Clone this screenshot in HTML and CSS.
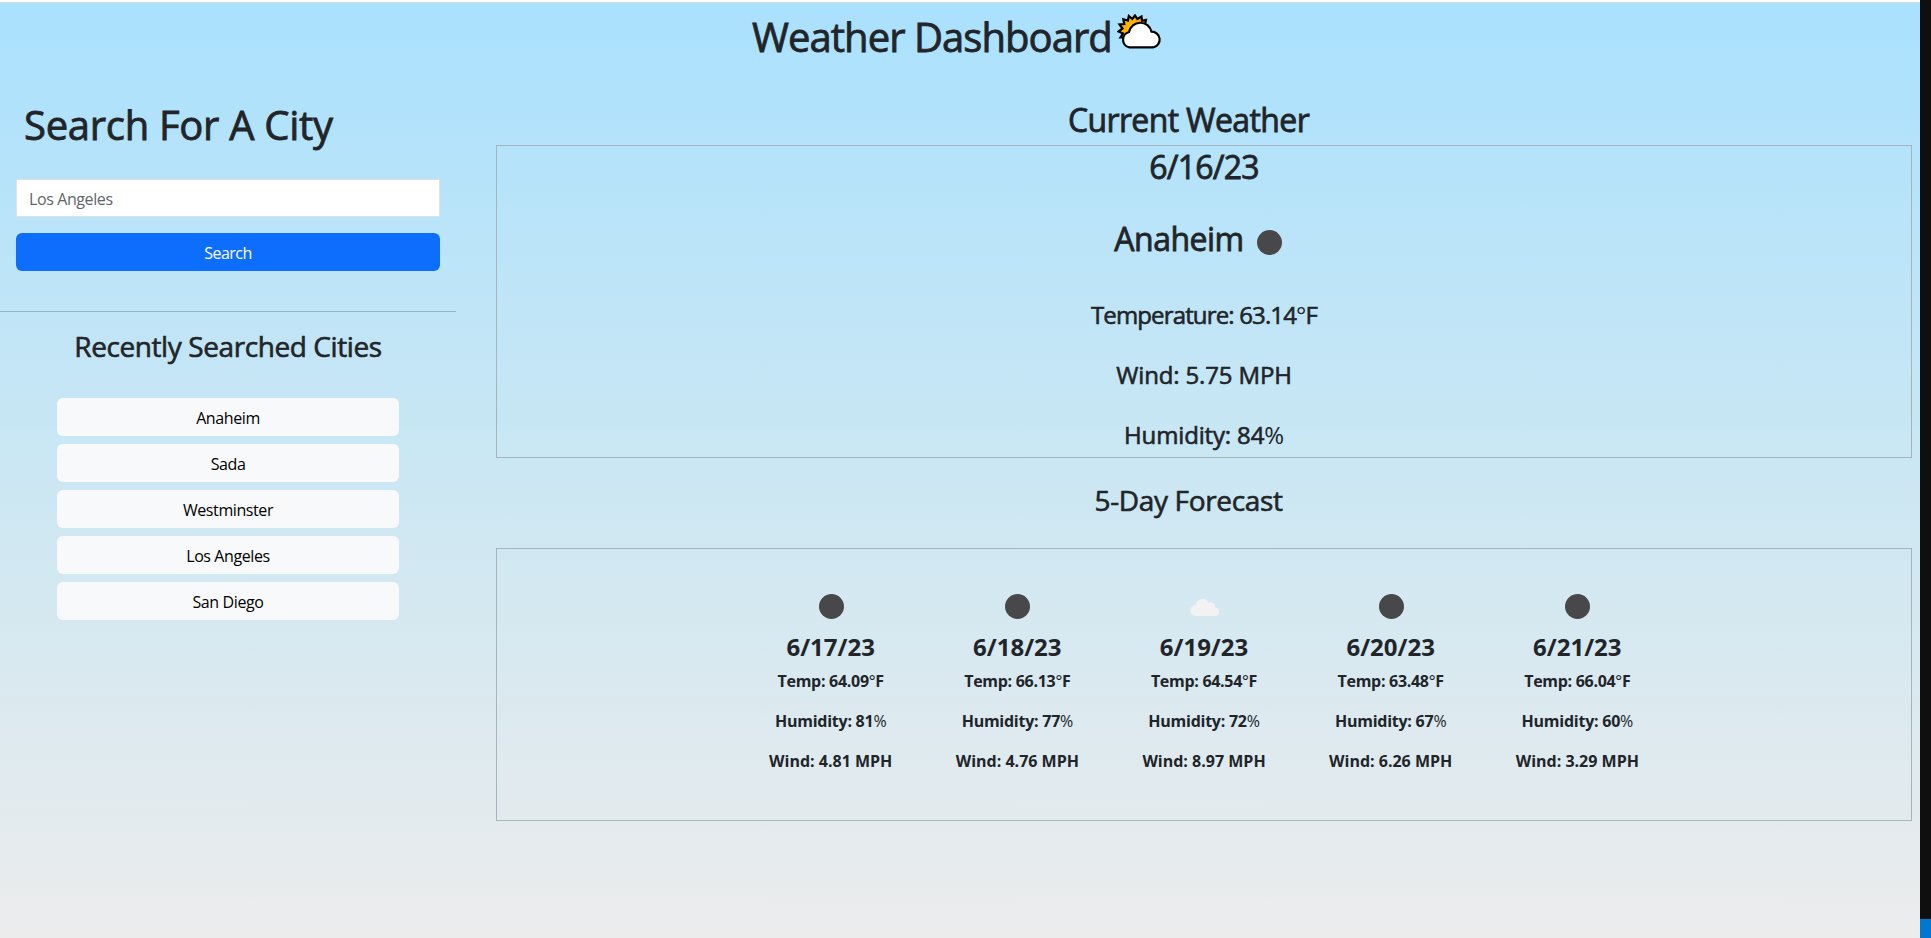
FILE: index.html
```html
<!DOCTYPE html>
<html lang="en">
<head>
<meta charset="utf-8">
<title>Weather Dashboard</title>
<link rel="stylesheet" href="styles.css">
</head>
<body>
<div class="page">
<header class="header">
<h1 class="title">Weather Dashboard</h1>
<svg class="logo" viewBox="0 0 46 36"><path d="M8.500 23.500 3.500 23.500 6 19.500 1.500 17.500 5.500 14.500 2.500 10.500 7.300 10 6.300 5.200 10.900 6.500 11.800 2 15.300 5 18 1.500 20.300 5 24.500 2.500 25 6.800 29 6 28 10.600 24 18 12 24Z" fill="#ffb000" stroke="#000" stroke-width="2.200"/><circle cx="18" cy="17" r="7.500" fill="#ffd400"/><path d="M12 33.300A7.900 7.900 0 0 1 12 18 11.500 11.500 0 0 1 34.500 17.700 7.900 7.900 0 0 1 36.500 33.300Z" fill="#fff" stroke="#000" stroke-width="2.200"/></svg>
</header>
<main class="main">
<aside class="sidebar">
<h1 class="search-title">Search For A City</h1>
<form class="form"><input class="field" type="text" placeholder="Los Angeles"><button class="submit" type="button">Search</button></form>
<h3 class="recent-title">Recently Searched Cities</h3>
<div class="cities">
<button class="city">Anaheim</button>
<button class="city">Sada</button>
<button class="city">Westminster</button>
<button class="city">Los Angeles</button>
<button class="city">San Diego</button>
</div>
</aside>
<section class="content">
<h2 class="section-title">Current Weather</h2>
<div class="current">
<h2 class="date">6/16/23</h2>
<h2 class="place"><span>Anaheim</span><i class="moon"></i></h2>
<h4 class="stat temp">Temperature: 63.14<span class="light">°</span>F</h4>
<h4 class="stat">Wind: 5.75 MPH</h4>
<h4 class="stat">Humidity: 84<span class="light">%</span></h4>
</div>
<h3 class="forecast-title">5-Day Forecast</h3>
<div class="forecast">
<article class="day"><div class="icon"><i class="moon"></i></div><h4 class="day-date">6/17/23</h4><p class="line tl">Temp: 64.09<span class="light">°</span>F</p><p class="line hl">Humidity: 81<span class="light">%</span></p><p class="line">Wind: 4.81 MPH</p></article>
<article class="day"><div class="icon"><i class="moon"></i></div><h4 class="day-date">6/18/23</h4><p class="line tl">Temp: 66.13<span class="light">°</span>F</p><p class="line hl">Humidity: 77<span class="light">%</span></p><p class="line">Wind: 4.76 MPH</p></article>
<article class="day"><div class="icon"><svg class="cloud" viewBox="0 0 30 19"><path d="M5.500 19a5.500 5.500 0 0 1 .5-11A6.500 6.500 0 0 1 18.500 5.800 4.500 4.500 0 0 1 25 10.500 4.300 4.300 0 0 1 26 19Z" fill="#f2f2f2"/></svg></div><h4 class="day-date">6/19/23</h4><p class="line tl">Temp: 64.54<span class="light">°</span>F</p><p class="line hl">Humidity: 72<span class="light">%</span></p><p class="line">Wind: 8.97 MPH</p></article>
<article class="day"><div class="icon"><i class="moon"></i></div><h4 class="day-date">6/20/23</h4><p class="line tl">Temp: 63.48<span class="light">°</span>F</p><p class="line hl">Humidity: 67<span class="light">%</span></p><p class="line">Wind: 6.26 MPH</p></article>
<article class="day"><div class="icon"><i class="moon"></i></div><h4 class="day-date">6/21/23</h4><p class="line tl">Temp: 66.04<span class="light">°</span>F</p><p class="line hl">Humidity: 60<span class="light">%</span></p><p class="line">Wind: 3.29 MPH</p></article>
</div>
</section>
</main>
</div>
<div class="edge"><div class="edge-accent"></div></div>
</body>
</html>
```
FILE: styles.css
```css
* { box-sizing: border-box; }
body { margin: 0; height: 938px; display: flex; overflow: hidden; font: 400 16px/24px "Open Sans", "Noto Sans", sans-serif; color: #212529; }
h1, h2, h3, h4, p { margin: 0; font-weight: 400; }
h1, h2 { -webkit-text-stroke: .8px #212529; }
h3, h4 { -webkit-text-stroke: .6px #212529; }
.page { width: 1920px; height: 938px; border-top: 2px solid #fff; background: linear-gradient(#aae1fe, #cbe7f3 50%, #ececec); }
.header { display: flex; height: 98px; padding: 10px 0 0 752px; border-top: 1px solid #d5d9e3; }
.title { width: 360px; font-size: 40px; line-height: 48px; white-space: nowrap; letter-spacing: -.95px; }
.logo { width: 46px; height: 36px; margin: 1px 0 0 5px; }
.main { display: grid; grid-template-columns: 456px 1416px; column-gap: 40px; }
.search-title { padding: 1px 0 0 24px; font-size: 40px; line-height: 48px; letter-spacing: -.3px; }
.form { display: flex; flex-direction: column; gap: 16px; height: 163px; padding: 30px 16px 0; border-bottom: 1px solid #93b4c8; }
.field { height: 38px; padding: 7px 12px 5px; border: 1px solid #dee2e6; background: #fff; font: inherit; letter-spacing: -.4px; }
.field::placeholder { color: #5f656b; opacity: 1; }
.submit { height: 38px; padding: 2px 0 0; border: 0; border-radius: 6px; background: #0d6efd; color: #fff; font: inherit; letter-spacing: -.5px; }
.recent-title { margin-top: 17px; font-size: 28px; line-height: 34px; text-align: center; letter-spacing: -.41px; }
.cities { display: grid; gap: 8px; padding: 35px 57px 0; }
.city { height: 38px; padding: 2px 0 0; border: 0; border-radius: 6px; background: #f8f9fa; color: #000; font: inherit; letter-spacing: -.4px; }
.content { text-align: center; }
.section-title { height: 45px; padding: 1px 31px 0 0; font-size: 32px; line-height: 38px; letter-spacing: -.63px; }
.current { height: 313px; padding-top: 2px; border: 1px solid #a6b5bd; }
.date, .place { font-size: 32px; line-height: 38px; letter-spacing: -.8px; }
.place { display: flex; justify-content: center; align-items: center; gap: 13px; margin-top: 34px; padding-right: 12px; letter-spacing: -.5px; }
.place .moon { margin-top: 7px; }
.moon { display: block; width: 25px; height: 25px; border-radius: 50%; background: #48484a; }
.stat { margin-top: 31px; font-size: 24px; line-height: 29px; letter-spacing: -.15px; }
.temp { margin-top: 42px; letter-spacing: -.85px; }
.light { font-weight: 400; -webkit-text-stroke: 0; }
.forecast-title { margin-top: 25px; padding-right: 31px; font-size: 28px; line-height: 34px; letter-spacing: -.35px; }
.forecast { display: grid; grid-template-columns: repeat(5, 186.670px); justify-content: center; height: 273px; margin-top: 31px; padding-top: 32px; border: 1px solid #a6b5bd; }
.icon { display: flex; align-items: center; justify-content: center; height: 51px; padding-left: 1px; }
.cloud { width: 30px; height: 19px; }
.day-date { font-size: 24px; line-height: 29px; font-weight: 700; -webkit-text-stroke: 0; }
.line { margin-bottom: 16px; font-weight: 700; }
.tl { margin-top: 8px; letter-spacing: -.3px; }
.hl { letter-spacing: -.25px; }
.edge { display: flex; align-items: flex-end; width: 11px; background: #0f0f0f; }
.edge-accent { width: 11px; height: 19px; background: #0078d0; }
```
